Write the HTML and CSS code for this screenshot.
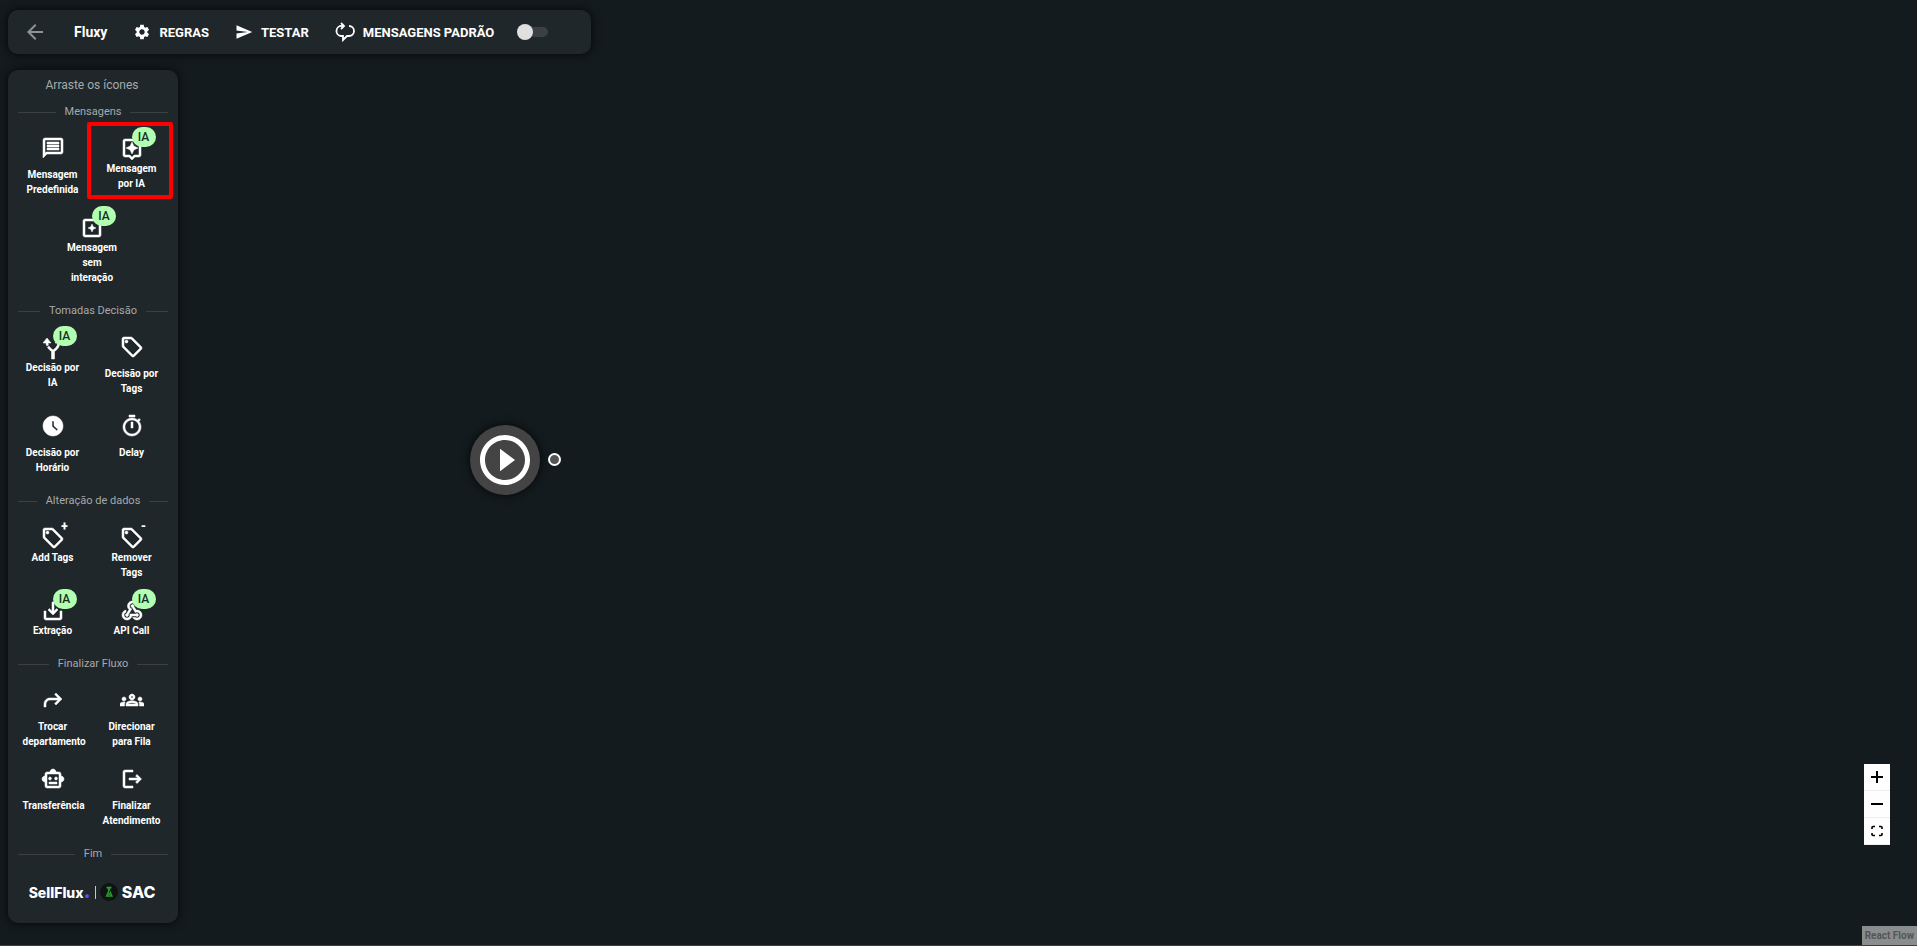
FILE: index.html
```html
<!DOCTYPE html>
<html lang="pt-BR">
<head>
  <meta charset="UTF-8" />
  <meta name="viewport" content="width=device-width, initial-scale=1.0"/>
  <title>Fluxy</title>
  <link rel="stylesheet" href="styles.css">
</head>
<body>

  <!-- Top bar -->
  <header class="toolbar">
    <a href="#" class="back" aria-label="Voltar">
      <svg class="icon" viewBox="0 0 24 24"><path d="M20 11H7.83l5.59-5.59L12 4l-8 8 8 8 1.41-1.41L7.83 13H20v-2z"/></svg>
    </a>
    <h1>Fluxy</h1>
    <button class="tool">
      <svg class="icon-small" viewBox="0 0 24 24"><path d="M19.14 12.94c.04-.3.06-.61.06-.94 0-.32-.02-.64-.07-.94l2.03-1.58c.18-.14.23-.41.12-.61l-1.92-3.32c-.12-.22-.37-.29-.59-.22l-2.39.96c-.5-.38-1.03-.7-1.62-.94l-.36-2.54c-.04-.24-.24-.41-.48-.41h-3.84c-.24 0-.43.17-.47.41l-.36 2.54c-.59.24-1.13.57-1.62.94l-2.39-.96c-.22-.08-.47 0-.59.22L2.74 8.87c-.12.21-.08.47.12.61l2.03 1.58c-.05.3-.09.63-.09.94s.02.64.07.94l-2.03 1.58c-.18.14-.23.41-.12.61l1.92 3.32c.12.22.37.29.59.22l2.39-.96c.5.38 1.03.7 1.62.94l.36 2.54c.05.24.24.41.48.41h3.84c.24 0 .44-.17.47-.41l.36-2.54c.59-.24 1.13-.56 1.62-.94l2.39.96c.22.08.47 0 .59-.22l1.92-3.32c.12-.22.07-.47-.12-.61l-2.01-1.58zM12 15.6c-1.98 0-3.6-1.62-3.6-3.6s1.62-3.6 3.6-3.6 3.6 1.62 3.6 3.6-1.62 3.6-3.6 3.6z"/></svg>
      REGRAS
    </button>
    <button class="tool">
      <svg class="icon-small" viewBox="0 0 24 24"><path d="M2.01 21L23 12 2.01 3 2 10l15 2-15 2z"/></svg>
      TESTAR
    </button>
    <button class="tool" id="default-messages">
      <svg class="icon-line" viewBox="0 0 20 20"><path d="M9 4H7a5 5 0 0 0-1 10h2v4l4-4h2a5 5 0 0 0 0-10M6 1l3 3-3 3"/></svg>
      MENSAGENS PADRÃO
    </button>
    <input type="checkbox" class="switch" aria-labelledby="default-messages">
  </header>

  <!-- Node palette -->
  <aside class="sidebar">
    <p class="hint">Arraste os ícones</p>

    <h2>Mensagens</h2>
    <div class="items">
      <button class="item">
        <svg class="icon" viewBox="0 0 24 24"><path d="M4 4h16v12H5.17L4 17.17V4m0-2c-1.1 0-1.99.9-1.99 2L2 22l4-4h14c1.1 0 2-.9 2-2V4c0-1.1-.9-2-2-2H4zm2 10h12v2H6v-2zm0-3h12v2H6V9zm0-3h12v2H6V6z"/></svg>
        <span>Mensagem Predefinida</span>
      </button>
      <button class="item compact selected">
        <svg class="icon" viewBox="0 0 24 24"><path d="M19 2H5c-1.11 0-2 .9-2 2v14c0 1.1.89 2 2 2h4l3 3 3-3h4c1.1 0 2-.9 2-2V4c0-1.1-.9-2-2-2zm0 16h-4.83l-.59.59L12 20.17l-1.59-1.59-.58-.58H5V4h14v14zm-7-1l1.88-4.12L18 11l-4.12-1.88L12 5l-1.88 4.12L6 11l4.12 1.88z"/></svg>
        <b class="badge">IA</b>
        <span>Mensagem por IA</span>
      </button>
      <button class="item compact wide">
        <svg class="icon" viewBox="0 0 24 24"><path d="M19 3H5c-1.1 0-2 .9-2 2v14c0 1.1.9 2 2 2h14c1.1 0 2-.9 2-2V5c0-1.1-.9-2-2-2zm0 16H5V5h14v14zm-7-3l1.2-2.8L16 12l-2.8-1.2L12 8l-1.2 2.8L8 12l2.8 1.2z"/></svg>
        <b class="badge">IA</b>
        <span>Mensagem sem interação</span>
      </button>
    </div>

    <h2>Tomadas Decisão</h2>
    <div class="items">
      <button class="item compact">
        <svg class="icon" viewBox="0 0 24 24"><path d="M6 2L2 7h3c.1 1.1.3 2 .6 2.8l1.9-.6C7.2 8.6 7.1 7.9 7 7h3L6 2zM6.4 11.2c1 1.9 2.3 3 4.1 4.3V23h3v-7.5c3-2.2 4.9-4 5.3-8.5H22l-4-5-4 5h2.7c-.3 3.5-1.8 4.9-4.7 7-1.7-1.2-2.9-2.2-3.7-3.7l-1.9.9z"/></svg>
        <b class="badge">IA</b>
        <span>Decisão por IA</span>
      </button>
      <button class="item">
        <svg class="icon" viewBox="0 0 24 24"><path d="M21.41 11.58l-9-9C12.05 2.22 11.55 2 11 2H4c-1.1 0-2 .9-2 2v7c0 .55.22 1.05.59 1.42l9 9c.36.36.86.58 1.41.58s1.05-.22 1.41-.59l7-7c.37-.36.59-.86.59-1.41s-.23-1.06-.59-1.42zM13 20.01L4 11V4h7v-.01l9 9-7 7.02z"/><circle cx="6.5" cy="6.5" r="1.5"/></svg>
        <span>Decisão por Tags</span>
      </button>
      <button class="item">
        <svg class="icon" viewBox="0 0 24 24"><path d="M12 2C6.5 2 2 6.5 2 12s4.5 10 10 10 10-4.5 10-10S17.5 2 12 2zm3.7 14.8L11 12.5V7h2v4.7l4 3.7-1.3 1.4z"/></svg>
        <span>Decisão por Horário</span>
      </button>
      <button class="item">
        <svg class="icon" viewBox="0 0 24 24"><path d="M15 1H9v2h6V1zm-4 13h2V8h-2v6zm8.03-6.61l1.42-1.42c-.43-.51-.9-.99-1.41-1.41l-1.42 1.42C16.07 4.74 14.12 4 12 4c-4.97 0-9 4.03-9 9s4.02 9 9 9 9-4.03 9-9c0-2.12-.74-4.07-1.97-5.61zM12 20c-3.87 0-7-3.13-7-7s3.13-7 7-7 7 3.13 7 7-3.13 7-7 7z"/></svg>
        <span>Delay</span>
      </button>
    </div>

    <h2>Alteração de dados</h2>
    <div class="items">
      <button class="item compact">
        <svg class="icon" viewBox="0 0 24 24"><path d="M21.41 11.58l-9-9C12.05 2.22 11.55 2 11 2H4c-1.1 0-2 .9-2 2v7c0 .55.22 1.05.59 1.42l9 9c.36.36.86.58 1.41.58s1.05-.22 1.41-.59l7-7c.37-.36.59-.86.59-1.41s-.23-1.06-.59-1.42zM13 20.01L4 11V4h7v-.01l9 9-7 7.02z"/><circle cx="6.5" cy="6.5" r="1.5"/></svg>
        <b class="sign">+</b>
        <span>Add Tags</span>
      </button>
      <button class="item compact">
        <svg class="icon" viewBox="0 0 24 24"><path d="M21.41 11.58l-9-9C12.05 2.22 11.55 2 11 2H4c-1.1 0-2 .9-2 2v7c0 .55.22 1.05.59 1.42l9 9c.36.36.86.58 1.41.58s1.05-.22 1.41-.59l7-7c.37-.36.59-.86.59-1.41s-.23-1.06-.59-1.42zM13 20.01L4 11V4h7v-.01l9 9-7 7.02z"/><circle cx="6.5" cy="6.5" r="1.5"/></svg>
        <b class="sign">-</b>
        <span>Remover Tags</span>
      </button>
      <button class="item compact">
        <svg class="icon" viewBox="0 0 24 24"><path d="M3 12h2v7h14v-7h2v7c0 1.1-.9 2-2 2H5c-1.1 0-2-.9-2-2v-7zM11 3h2v9.2l2.6-2.6L17 11l-5 5-5-5 1.4-1.4 2.6 2.6V3z"/></svg>
        <b class="badge">IA</b>
        <span>Extração</span>
      </button>
      <button class="item compact">
        <svg class="icon" viewBox="0 0 24 24"><path d="M10 15h5.88c.27-.31.67-.5 1.12-.5.83 0 1.5.67 1.5 1.5s-.67 1.5-1.5 1.5c-.44 0-.84-.19-1.12-.5H11.9c-.46 2.28-2.48 4-4.9 4-2.76 0-5-2.24-5-5 0-2.42 1.72-4.44 4-4.9v2.07c-1.16.41-2 1.53-2 2.83 0 1.65 1.35 3 3 3s3-1.35 3-3v-1zm2.5-11c1.65 0 3 1.35 3 3h2c0-2.76-2.24-5-5-5s-5 2.24-5 5c0 1.43.6 2.71 1.55 3.62l-2.35 3.9c-.68.14-1.2.75-1.2 1.48 0 .83.67 1.5 1.5 1.5s1.5-.67 1.5-1.5c0-.16-.02-.31-.07-.45l3.38-5.63C10.49 9.61 9.5 8.42 9.5 7c0-1.65 1.35-3 3-3zm4.5 9c-.64 0-1.23.2-1.72.54l-3.05-5.07C11.53 8.35 11 7.74 11 7c0-.83.67-1.5 1.5-1.5S14 6.17 14 7c0 .15-.02.29-.06.43l2.19 3.65c.28-.05.57-.08.87-.08 2.76 0 5 2.24 5 5s-2.24 5-5 5c-1.85 0-3.47-1.01-4.33-2.5h2.67c.48.32 1.05.5 1.66.5 1.65 0 3-1.35 3-3s-1.35-3-3-3z"/></svg>
        <b class="badge">IA</b>
        <span>API Call</span>
      </button>
    </div>

    <h2>Finalizar Fluxo</h2>
    <div class="items">
      <button class="item">
        <svg class="icon" viewBox="0 0 24 24"><path d="M15 5l6 6-6 6-1.4-1.4 3.5-3.6H9c-2.2 0-4 1.8-4 4v3H3v-3c0-3.3 2.7-6 6-6h8.1l-3.5-3.6L15 5z"/></svg>
        <span>Trocar departamento</span>
      </button>
      <button class="item">
        <svg class="icon" viewBox="0 0 24 24"><path d="M4 13c1.1 0 2-.9 2-2s-.9-2-2-2-2 .9-2 2 .9 2 2 2zm1.13 1.1c-.37-.06-.74-.1-1.13-.1-.99 0-1.93.21-2.78.58C.48 14.9 0 15.62 0 16.43V18h4.5v-1.61c0-.83.23-1.61.63-2.29zM20 13c1.1 0 2-.9 2-2s-.9-2-2-2-2 .9-2 2 .9 2 2 2zm4 3.43c0-.81-.48-1.53-1.22-1.85-.85-.37-1.79-.58-2.78-.58-.39 0-.76.04-1.13.1.4.68.63 1.46.63 2.29V18H24v-1.57zm-7.76-2.78c-1.17-.52-2.61-.9-4.24-.9-1.63 0-3.07.39-4.24.9C6.68 14.13 6 15.21 6 16.39V18h12v-1.61c0-1.18-.68-2.26-1.76-2.74zM8.07 16c.09-.23.13-.39.91-.69.97-.38 1.99-.56 3.02-.56s2.05.18 3.02.56c.77.3.81.46.91.69H8.07zM12 8c.55 0 1 .45 1 1s-.45 1-1 1-1-.45-1-1 .45-1 1-1m0-2c-1.66 0-3 1.34-3 3s1.34 3 3 3 3-1.34 3-3-1.34-3-3-3z"/></svg>
        <span>Direcionar para Fila</span>
      </button>
      <button class="item">
        <svg class="icon" viewBox="0 0 24 24"><path d="M20 9V7c0-1.1-.9-2-2-2h-3c0-1.66-1.34-3-3-3S9 3.34 9 5H6c-1.1 0-2 .9-2 2v2c-1.66 0-3 1.34-3 3s1.34 3 3 3v4c0 1.1.9 2 2 2h12c1.1 0 2-.9 2-2v-4c1.66 0 3-1.34 3-3s-1.34-3-3-3zm-2 10H6V7h12v12zm-9-6c-.83 0-1.5-.67-1.5-1.5S8.17 10 9 10s1.5.67 1.5 1.5S9.83 13 9 13zm7.5-1.5c0 .83-.67 1.5-1.5 1.5s-1.5-.67-1.5-1.5.67-1.5 1.5-1.5 1.5.67 1.5 1.5zM8 15h8v2H8v-2z"/></svg>
        <span>Transferência</span>
      </button>
      <button class="item">
        <svg class="icon" viewBox="0 0 24 24"><path d="M5 5h8V3H5c-1.1 0-2 .9-2 2v14c0 1.1.9 2 2 2h8v-2H5V5zM21.5 12L17 7.5l-1.4 1.4 2.1 2.1H9v2h8.7l-2.1 2.1 1.4 1.4z"/></svg>
        <span>Finalizar Atendimento</span>
      </button>
    </div>

    <h2>Fim</h2>
    <div class="brand">
      <span class="brand-name">SellFlux<i>.</i></span>
      <span class="brand-line"></span>
      <svg class="brand-logo" viewBox="0 0 18 18"><circle cx="9" cy="9" r="9" fill="#101314"/><path d="M6.5 4.5h5M7.5 4.5l1.5 3 1.5-3M9 7.5L6.5 13H12l-2-4.500M8 11h2.5" fill="none" stroke="#27a32e" stroke-width="1.3"/></svg>
      <span class="brand-product">SAC</span>
    </div>
  </aside>

  <!-- Flow canvas -->
  <main class="canvas">
    <div class="node start">
      <svg viewBox="0 0 24 24"><path d="M10 16.5l6-4.5-6-4.5v9zM12 2C6.48 2 2 6.48 2 12s4.48 10 10 10 10-4.48 10-10S17.52 2 12 2zm0 18c-4.41 0-8-3.59-8-8s3.59-8 8-8 8 3.59 8 8-3.59 8-8 8z"/></svg>
      <span class="handle"></span>
    </div>
  </main>

  <div class="controls">
    <button aria-label="Aproximar"><svg viewBox="0 0 12 12"><path d="M5 0h2v5h5v2H7v5H5V7H0V5h5z"/></svg></button>
    <button aria-label="Afastar"><svg viewBox="0 0 12 12"><path d="M0 5h12v2H0z"/></svg></button>
    <button aria-label="Ajustar"><svg viewBox="0 0 12 12"><path d="M1 4V2.5q0-1 1-1h2M8 1.500h2q1 0 1 1V4M11 8v1.5q0 1-1 1H8M4 10.500H2q-1 0-1-1V8" fill="none" stroke="#000" stroke-width="1.6"/></svg></button>
  </div>
  <a href="#" class="attribution">React Flow</a>

</body>
</html>
```

FILE: styles.css
```css
* {
  box-sizing: border-box;
  margin: 0;
  padding: 0;
}

body {
  position: relative;
  min-height: 100vh;
  padding: 10px 8px;
  font-family: Roboto, sans-serif;
  color: #fff;
  background-color: #131b1e;
  border-bottom: 1px solid #3c4042;
}

button {
  font-family: inherit;
  color: inherit;
  background: none;
  border: none;
  cursor: pointer;
}

svg {
  display: block;
  fill: currentColor;
}

.icon {
  width: 24px;
  height: 24px;
}

.icon-small {
  width: 18px;
  height: 18px;
}

/* Top bar */
.toolbar {
  position: relative;
  z-index: 1;
  display: flex;
  align-items: center;
  width: fit-content;
  height: 44px;
  padding: 0 43px 0 15px;
  border-radius: 10px;
  background-color: #20272a;
  box-shadow: 0 0 10px rgba(0, 0, 0, 0.8);
}

.back {
  color: #8f9394;
}

.toolbar h1 {
  margin: 0 26px 0 27px;
  font-size: 14px;
  font-weight: 700;
}

.tool {
  display: flex;
  align-items: center;
  gap: 8px;
  margin-right: 26px;
  font-size: 13px;
  font-weight: 700;
}

.icon-line {
  width: 20px;
  height: 20px;
  fill: none;
  stroke: currentColor;
  stroke-width: 1.8;
}

.switch {
  appearance: none;
  position: relative;
  width: 28px;
  height: 10px;
  border-radius: 5px;
  background-color: #3a4043;
  cursor: pointer;
}

.switch::before {
  content: "";
  position: absolute;
  top: -3px;
  left: -3px;
  width: 16px;
  height: 16px;
  border-radius: 50%;
  background-color: #e0e0e0;
}

/* Node palette */
.sidebar {
  position: relative;
  z-index: 1;
  width: 170px;
  margin-top: 16px;
  padding: 5px 7px 20px 5px;
  border-radius: 10px;
  background-color: #20272a;
  box-shadow: 0 0 10px rgba(0, 0, 0, 0.8);
}

.hint {
  margin-bottom: 9px;
  font-size: 12px;
  line-height: 20px;
  text-align: center;
  color: #a6a9aa;
}

.sidebar h2 {
  display: flex;
  align-items: center;
  gap: 9px;
  margin: 0 3px 7px 5px;
  font-size: 11px;
  font-weight: 400;
  line-height: 16px;
  color: #a6a9aa;
}

.sidebar h2::before,
.sidebar h2::after {
  content: "";
  flex: 1;
  height: 1px;
  background-color: #3a4043;
}

.items {
  display: grid;
  grid-template-columns: 1fr 1fr;
  align-items: start;
  row-gap: 9px;
  margin-bottom: 18px;
}

.item {
  position: relative;
  display: flex;
  flex-direction: column;
  align-items: center;
  gap: 7px;
  padding: 9px 0 0;
  font-size: 10px;
  font-weight: 700;
  line-height: 15px;
}

.item span {
  width: 60px;
}

.item .icon {
  stroke: currentColor;
  stroke-width: 0.5;
}

.item.compact {
  gap: 0;
  padding-top: 10px;
}

.item.wide {
  grid-column: 1 / 3;
  justify-self: center;
  width: 79px;
}

.item.selected::after {
  content: "";
  position: absolute;
  inset: -5px -2px -8px -5px;
  border: 4px solid #f00;
  border-radius: 2px;
}

.badge {
  position: absolute;
  top: 0;
  left: 50%;
  width: 24px;
  height: 20px;
  border-radius: 10px;
  font-size: 12px;
  font-weight: 500;
  line-height: 20px;
  color: #14301c;
  background-color: #b2ffb2;
}

.sign {
  position: absolute;
  top: 4px;
  left: 50%;
  width: 24px;
  font-size: 12px;
  line-height: 12px;
}

.brand {
  display: flex;
  align-items: center;
  justify-content: center;
  gap: 4px;
  height: 22px;
  margin-top: 19px;
  font-weight: 800;
}

.brand-name {
  font-family: Inter, sans-serif;
  font-size: 14px;
}

.brand-name i {
  font-size: 20px;
  font-style: normal;
  line-height: 0;
  color: #5b4dff;
}

.brand-line {
  width: 1px;
  height: 13px;
  background-color: #c4c6c7;
}

.brand-logo {
  width: 18px;
  height: 18px;
}

.brand-product {
  font-family: Inter, sans-serif;
  font-size: 16px;
}

/* Flow canvas */
.canvas {
  position: absolute;
  inset: 0;
  overflow: hidden;
}

.node {
  position: absolute;
}

.start {
  top: 425px;
  left: 470px;
  padding: 5px;
  border-radius: 50%;
  background-color: #444;
  box-shadow: 0 0 10px rgba(0, 0, 0, 0.8);
}

.start svg {
  width: 60px;
  height: 60px;
}

.handle {
  position: absolute;
  top: 28px;
  right: -21px;
  width: 13px;
  height: 13px;
  border: 2px solid #fff;
  border-radius: 50%;
  background-color: #555;
}

.controls {
  position: absolute;
  right: 27px;
  bottom: 100px;
  display: flex;
  flex-direction: column;
}

.controls button {
  padding: 7px;
  border-bottom: 1px solid #eee;
  color: #000;
  background-color: #fefefe;
}

.controls svg {
  width: 12px;
  height: 12px;
}

.attribution {
  position: absolute;
  right: 0;
  bottom: 0;
  padding: 2px 3px;
  font-size: 10px;
  font-weight: 700;
  line-height: 15px;
  text-decoration: none;
  color: #555;
  background-color: #898d8e;
}
```
